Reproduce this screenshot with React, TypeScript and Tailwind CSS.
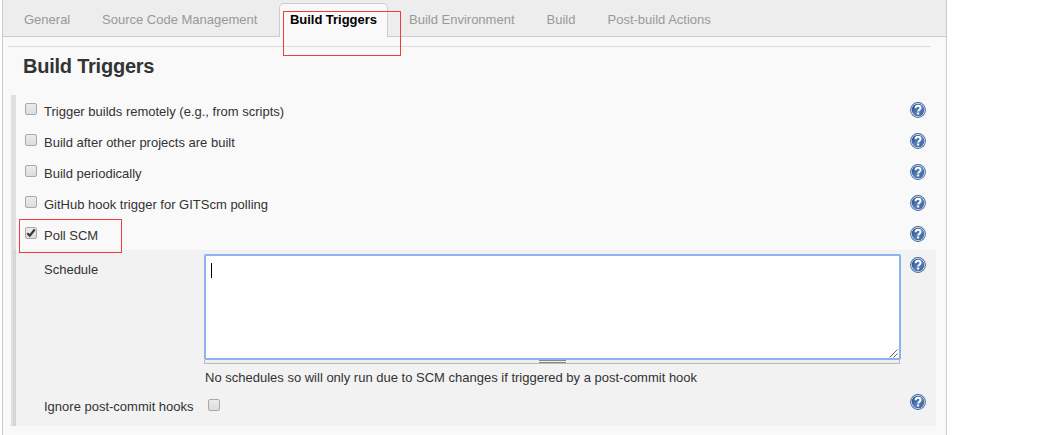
import { useId } from "react";

const HelpIcon = () => {
  const id = useId();
  return (
    <svg className="block h-4 w-4" viewBox="0 0 16 16" xmlns="http://www.w3.org/2000/svg">
      <defs>
        <linearGradient id={id} x1="0" y1="0" x2="1" y2="1">
          <stop offset="0" stopColor="#17407f" />
          <stop offset="0.55" stopColor="#5c82b8" />
          <stop offset="1" stopColor="#2b5294" />
        </linearGradient>
      </defs>
      <circle cx="8" cy="8" r="7.9" fill="#3c659f" />
      <circle cx="8" cy="8" r="7" fill="#e6edf6" />
      <circle cx="8" cy="8" r="6.3" fill={`url(#${id})`} />
      <path
        d="M5.5 6.3C5.5 4.3 6.6 3.7 8 3.7s2.5.8 2.5 2.2c0 1.7-2.3 1.8-2.3 3.6"
        fill="none"
        stroke="#fff"
        strokeWidth="1.9"
      />
      <rect x="7.1" y="10.5" width="2.1" height="2" fill="#fff" />
    </svg>
  );
};

const Checkbox = ({ checked = false }: { checked?: boolean }) => (
  <span className="block h-3 w-3 shrink-0 rounded-[2px] border border-[#a9a9a9] bg-linear-to-b from-[#ececec] to-[#dcdcdc]">
    {checked && (
      <svg className="block h-[10px] w-[10px]" viewBox="0 0 10 10" fill="none" stroke="#333" strokeWidth="2.1">
        <path d="M1.3 5.2 3.8 7.6 8.7 1.5" />
      </svg>
    )}
  </span>
);

const tabs = [
  { label: "General", className: "w-[78px]" },
  { label: "Source Code Management", className: "w-[198px]" },
];

const laterTabs = [
  { label: "Build Environment", className: "w-[137.5px]" },
  { label: "Build", className: "w-[61px]" },
  { label: "Post-build Actions", className: "" },
];

const triggers = [
  { label: "Trigger builds remotely (e.g., from scripts)", checked: false },
  { label: "Build after other projects are built", checked: false },
  { label: "Build periodically", checked: false },
  { label: "GitHub hook trigger for GITScm polling", checked: false },
  { label: "Poll SCM", checked: true },
];

const App = () => {
  return (
    <div className="relative h-[435px] w-[1043px] overflow-hidden bg-white font-['Liberation_Sans',Arial,sans-serif] text-[13px] leading-[15px] text-[#333]">
      <div className="ml-[2px] h-full w-[945px] border-x border-[#ccc] bg-[#f9f9f9]">
        <nav className="flex h-[37px] border-b border-[#ccc] bg-[#ededed] pt-[3px] text-[#999]">
          {tabs.map((tab) => (
            <a key={tab.label} className={`${tab.className} shrink-0 pt-[9px] pl-[21px]`}>
              {tab.label}
            </a>
          ))}
          <a className="h-[34px] w-[109px] shrink-0 rounded-t-[5px] border border-b-0 border-[#ccc] bg-[#f9f9f9] pt-[8px] pl-[10px] font-bold tracking-[-0.04px] text-black">
            Build Triggers
          </a>
          <div className="flex pt-[9px] pl-[21px]">
            {laterTabs.map((tab) => (
              <a key={tab.label} className={`${tab.className} whitespace-nowrap`}>
                {tab.label}
              </a>
            ))}
          </div>
        </nav>

        <div className="mt-[9px] ml-[5px] h-px w-[923px] bg-[#ddd]" />
        <h2 className="mt-[7px] ml-[20px] h-[41px] text-[20px] leading-[24px] font-bold tracking-[-0.23px]">
          Build Triggers
        </h2>

        <section className="ml-[8px] h-[331px] w-[925px] border-l-[5px] border-[#e0e0e0]">
          {triggers.map((trigger) => (
            <div key={trigger.label} className="flex h-[31px] items-start pt-[8px] pl-[9px]">
              <Checkbox checked={trigger.checked} />
              <span className="ml-[7px] pt-px">{trigger.label}</span>
              <span className="mr-[10px] -mt-px ml-auto">
                <HelpIcon />
              </span>
            </div>
          ))}

          <div className="-ml-[3px] h-[176px] border-l-[3px] border-[#d6d6d6] bg-[#f2f2f2]">
            <div className="flex h-[113px] items-start pt-[4px] pl-[28px]">
              <span className="w-[160px] pt-[8px]">Schedule</span>
              <div className="w-[697px]">
                <div className="relative h-[106px] rounded-[2px] border-2 border-[#8db2ed] bg-white pt-[7px] pl-[5px]">
                  <div className="h-[15px] w-px bg-black" />
                  <svg className="absolute right-px bottom-0 h-[9px] w-[9px]" viewBox="0 0 9 9" stroke="#666" fill="none">
                    <path d="M0.5 8.5 8.5 0.5M4.5 8.5 8.5 4.5" />
                  </svg>
                </div>
                <div className="mr-px flex h-[4px] justify-center border-b border-x border-[#bbb] bg-[#eee]">
                  <div className="h-[3px] w-[27px] border-y border-[#888]" />
                </div>
              </div>
              <span className="mt-[3px] ml-[9px]">
                <HelpIcon />
              </span>
            </div>
            <div className="mt-[7px] ml-[189px]">
              No schedules so will only run due to SCM changes if triggered by a post-commit hook
            </div>
            <div className="mt-[9px] flex items-start pl-[28px]">
              <span className="mt-[5px] w-[164px]">Ignore post-commit hooks</span>
              <span className="mt-[5px]">
                <Checkbox />
              </span>
              <span className="mr-[10px] ml-auto">
                <HelpIcon />
              </span>
            </div>
          </div>
        </section>
      </div>

      {/* red callouts */}
      <div className="absolute top-[11px] left-[283px] h-[45px] w-[118px] border border-[#f03c3c]" />
      <div className="absolute top-[219px] left-[19px] h-[34px] w-[103px] border border-[#f03c3c]" />
    </div>
  );
};

export default App;
